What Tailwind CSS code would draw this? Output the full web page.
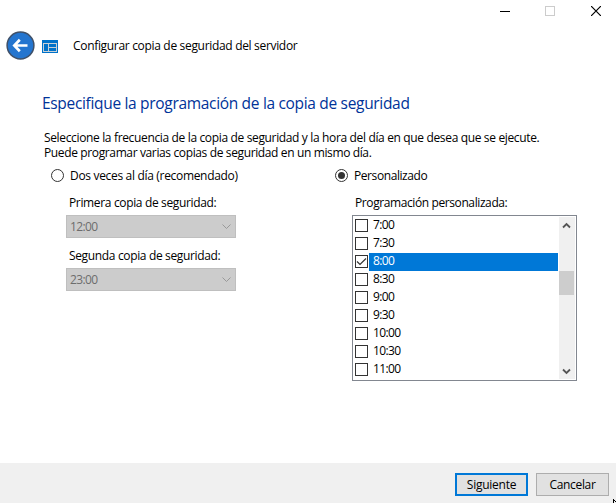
<!DOCTYPE html>
<html lang="es">
<head>
<meta charset="utf-8">
<title>Configurar copia de seguridad del servidor</title>
<script src="https://cdn.jsdelivr.net/npm/@tailwindcss/browser@4"></script>
</head>
<body class="bg-white">
<div class="relative flex h-[503px] w-[616px] flex-col overflow-hidden bg-white font-['Open_Sans','Noto_Sans',sans-serif] text-[12px] leading-[15px] tracking-[-0.35px] whitespace-nowrap text-black">
  <div class="flex h-[23px] shrink-0 items-start justify-end pt-[6px] pr-[15px]">
    <svg width="10" height="10" shape-rendering="crispEdges"><path d="M0 5.5H10" stroke="#000"/></svg>
    <svg class="mr-[36px] ml-[35px]" width="10" height="10" shape-rendering="crispEdges"><rect x=".5" y=".5" width="9" height="9" fill="none" stroke="#ccc"/></svg>
    <svg width="10" height="10"><path d="M0 0L10 10M10 0L0 10" stroke="#000" stroke-width="1.2"/></svg>
  </div>
  <header class="flex h-[45px] shrink-0 items-center pl-[6px]">
    <svg width="29" height="29" viewBox="0 0 29 29"><circle cx="14.5" cy="14.5" r="13.4" fill="#2475cf" stroke="#3f5068" stroke-width="1.5"/><path d="M21.5 14.5H8.5M13.8 8.8L8.3 14.5L13.8 20.2" fill="none" stroke="#fff" stroke-width="2.7"/></svg>
    <svg class="mt-[2px] ml-[7px]" width="16" height="13" shape-rendering="crispEdges"><path fill="#0072c9" d="M0 0H16V13H0z"/><path d="M1 3H15V12H1z" fill="#c8d0d6"/><path d="M2 4H6V11H2zM7 4H14V7H7zM7 8H14V11H7z" fill="#0072c9"/></svg>
    <span class="ml-[15px] tracking-[-0.32px]">Configurar copia de seguridad del servidor</span>
  </header>
  <main class="flex h-[395px] shrink-0 flex-col pl-[42px]">
    <h1 class="mt-[24px] text-[15.5px] leading-[22px] tracking-[-0.32px] text-[#003399]">Especifique la programación de la copia de seguridad</h1>
    <p class="mt-[16px] ml-[2px]">Seleccione la frecuencia de la copia de seguridad y la hora del día en que desea que se ejecute.<br><span class="tracking-[-0.37px]">Puede programar varias copias de seguridad en un mismo día.</span></p>
    <div class="mt-[8px] flex">
      <section class="w-[293px] pl-[9px]">
        <div class="flex h-[15px] items-center">
          <svg width="13" height="13"><circle cx="6.5" cy="6.5" r="6" fill="#fff" stroke="#333"/></svg>
          <span class="ml-[6px] tracking-[-0.32px]">Dos veces al día (recomendado)</span>
        </div>
        <div class="mt-[12px] ml-[18px]">Primera copia de seguridad:</div>
        <div class="mt-[5px] ml-[15px] flex h-[23px] w-[170px] items-center justify-between border border-[#bfbfbf] bg-[#ccc] pr-[4px] pl-[3px] tracking-[-0.6px] text-[#6d6d6d]"><span>12:00</span><svg width="9" height="6"><path d="M.5 .5L4.5 4.5L8.5 .5" fill="none" stroke="#999"/></svg></div>
        <div class="mt-[10px] ml-[18px]">Segunda copia de seguridad:</div>
        <div class="mt-[5px] ml-[15px] flex h-[23px] w-[170px] items-center justify-between border border-[#bfbfbf] bg-[#ccc] pr-[4px] pl-[3px] tracking-[-0.6px] text-[#6d6d6d]"><span>23:00</span><svg width="9" height="6"><path d="M.5 .5L4.5 4.5L8.5 .5" fill="none" stroke="#999"/></svg></div>
      </section>
      <section>
        <div class="flex h-[15px] items-center">
          <svg width="13" height="13"><circle cx="6.5" cy="6.5" r="6" fill="#fff" stroke="#333"/><circle cx="6.5" cy="6.5" r="3.5" fill="#333"/></svg>
          <span class="ml-[6px] tracking-[-0.42px]">Personalizado</span>
        </div>
        <div class="mt-[12px] ml-[20px] tracking-[-0.4px]">Programación personalizada:</div>
        <div class="mt-[5px] ml-[17px] flex h-[166px] w-[225px] border border-[#828790] py-px pr-px pl-[2px] tracking-[-0.6px]">
          <ul class="w-[204px] pr-px">
            <li class="flex h-[18px]"><i class="mt-[2px] size-[13px] border border-[#333]"></i><span class="ml-px h-full flex-1 pl-[4px]">7:00</span></li>
            <li class="flex h-[18px]"><i class="mt-[2px] size-[13px] border border-[#333]"></i><span class="ml-px h-full flex-1 pl-[4px]">7:30</span></li>
            <li class="flex h-[18px]"><i class="mt-[2px] size-[13px] border border-[#333]"><svg width="11" height="11"><path d="M1 5.5L4 8.5L10 2.5" fill="none" stroke="#333" stroke-width="1.2"/></svg></i><span class="ml-px h-full flex-1 bg-[#0078d7] pl-[4px] text-white">8:00</span></li>
            <li class="flex h-[18px]"><i class="mt-[2px] size-[13px] border border-[#333]"></i><span class="ml-px h-full flex-1 pl-[4px]">8:30</span></li>
            <li class="flex h-[18px]"><i class="mt-[2px] size-[13px] border border-[#333]"></i><span class="ml-px h-full flex-1 pl-[4px]">9:00</span></li>
            <li class="flex h-[18px]"><i class="mt-[2px] size-[13px] border border-[#333]"></i><span class="ml-px h-full flex-1 pl-[4px]">9:30</span></li>
            <li class="flex h-[18px]"><i class="mt-[2px] size-[13px] border border-[#333]"></i><span class="ml-px h-full flex-1 pl-[4px]">10:00</span></li>
            <li class="flex h-[18px]"><i class="mt-[2px] size-[13px] border border-[#333]"></i><span class="ml-px h-full flex-1 pl-[4px]">10:30</span></li>
            <li class="flex h-[18px]"><i class="mt-[2px] size-[13px] border border-[#333]"></i><span class="ml-px h-full flex-1 pl-[4px]">11:00</span></li>
          </ul>
          <div class="flex flex-1 flex-col items-start bg-[#f0f0f0]">
            <svg class="mt-[5px] ml-[3px]" width="9" height="7"><path d="M1 5.5L4.5 2L8 5.5" fill="none" stroke="#555" stroke-width="1.8"/></svg>
            <div class="mt-[42px] h-[24px] w-[15px] bg-[#cdcdcd]"></div>
            <svg class="mt-auto mb-[4px] ml-[3px]" width="9" height="7"><path d="M1 1.5L4.5 5L8 1.5" fill="none" stroke="#555" stroke-width="1.8"/></svg>
          </div>
        </div>
      </section>
    </div>
  </main>
  <footer class="flex h-[40px] shrink-0 justify-end gap-[8px] bg-[#f0f0f0] pt-[10px] pr-[7px]">
    <button class="h-[23px] w-[73px] border-2 border-[#0078d7] bg-[#e1e1e1] tracking-[-0.25px]">Siguiente</button>
    <button class="h-[23px] w-[73px] border border-[#adadad] bg-[#e1e1e1]">Cancelar</button>
  </footer>
  <svg class="absolute right-0 bottom-0" width="3" height="4"><path d="M0 0H1V4H0zM1 1H2V2H1zM2 2H3V3H2z" fill="#000"/></svg>
</div>
</body>
</html>
